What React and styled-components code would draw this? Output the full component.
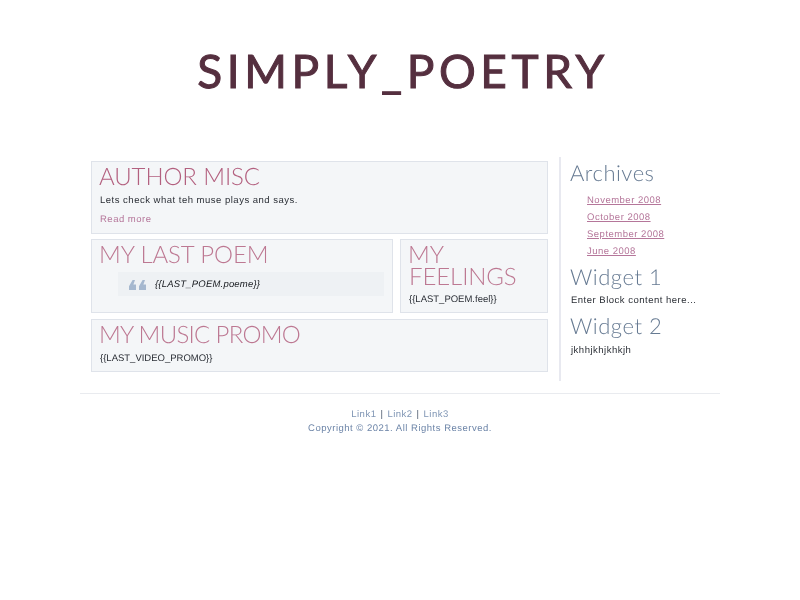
import React from 'react';
import styled, { createGlobalStyle } from 'styled-components';

const GlobalStyle = createGlobalStyle`
	html, body {
		margin: 0;
		padding: 0;
		background: #fff;
	}
	body {
		font-family: 'Liberation Sans', Arial, sans-serif;
		font-size: 9.5px;
		letter-spacing: 0.5px;
		text-rendering: geometricPrecision;
		color: #2b2f36;
	}
`;

const Page = styled.div`
	box-sizing: border-box;
	width: 640px;
	margin: 0 auto;
	will-change: transform;
`;

const Header = styled.header`
	display: flex;
	justify-content: center;
	height: 157px;
	padding: 41px 0 0 6px;
	box-sizing: border-box;
`;

const Logo = styled.h1`
	margin: 0;
	font-family: 'Lato', sans-serif;
	font-weight: 400;
	font-size: 46px;
	line-height: 60px;
	letter-spacing: 4.6px;
	-webkit-text-stroke: 1px #552f3f;
	color: #552f3f;
`;

const Main = styled.div`
	display: flex;
	align-items: flex-start;
	padding-left: 11px;
	padding-bottom: 12px;
	border-bottom: 1px solid #e9ebef;
`;

const Content = styled.main`
	width: 457px;
	padding-top: 4px;
	display: flex;
	flex-direction: column;
	gap: 5px;
`;

const Row = styled.div`
	display: flex;
	gap: 7px;
	padding-bottom: 1px;
`;

const Box = styled.section`
	box-sizing: border-box;
	flex: ${props => props.$flex || '0 0 auto'};
	height: ${props => props.$height}px;
	padding: 4px 8px 0;
	background: #f4f6f8;
	border: 1px solid #dfe3ea;
`;

const BoxTitle = styled.h2`
	margin: 0;
	font-family: 'Lato', sans-serif;
	font-weight: 300;
	font-size: 24px;
	line-height: 22px;
	text-indent: -1px;
	letter-spacing: ${props => props.$spacing || '-0.1px'};
	color: ${props => props.$dark ? '#b3607f' : '#bd7892'};
`;

const Text = styled.p`
	margin: ${props => props.$margin || '0'};
	line-height: 14px;
	letter-spacing: ${props => props.$tight ? '0' : '0.5px'};
`;

const ReadMore = styled.a`
	display: block;
	margin-top: 5px;
	line-height: 14px;
	color: #b5769a;
`;

const Quote = styled.blockquote`
	display: flex;
	align-items: center;
	gap: 9px;
	height: 24px;
	margin: 6px 0 0 18px;
	padding-left: 11px;
	width: 266px;
	box-sizing: border-box;
	background: #eef1f4;
	font-style: italic;
	letter-spacing: 0.2px;
	color: #15181d;
`;

const QuoteMark = styled.svg`
	width: 17px;
	height: 10px;
	margin-top: 2px;
	fill: #a6b8cf;
`;

const Sidebar = styled.aside`
	box-sizing: border-box;
	margin-left: 11px;
	width: 160px;
	height: 224px;
	padding: 3px 0 0 10px;
	border-left: 2px solid #e8e9f0;
`;

const SideTitle = styled.h3`
	margin: ${props => props.$margin || '0'};
	font-family: 'Lato', sans-serif;
	font-weight: 300;
	font-size: 22px;
	line-height: 26px;
	text-indent: -1px;
	letter-spacing: 0.5px;
	color: #667a92;
`;

const ArchiveList = styled.ul`
	list-style: none;
	margin: 6px 0 0;
	padding: 0 0 0 16px;
`;

const ArchiveItem = styled.li`
	height: 17px;
	line-height: 17px;
`;

const ArchiveLink = styled.a`
	color: #b5769a;
	text-decoration: underline;
`;

const Footer = styled.footer`
	padding-top: 14px;
	text-align: center;
	line-height: 14px;
	color: #6d85a8;
`;

const FooterLink = styled.a`
	color: #7f95b4;
`;

const Sep = styled.span`
	color: #4f5b6e;
	margin: 0 4px;
`;

const QuoteIcon = () => (
	<QuoteMark viewBox="0 0 17 10">
		<path d="M0 10V6.2L3.6 0H6L4.4 4.4H7V10z" />
		<path d="M10 10V6.2L13.6 0H16L14.4 4.4H17V10z" />
	</QuoteMark>
);

const App = () => (
	<>
		<GlobalStyle />
		<Page>
			<Header>
				<Logo>SIMPLY_POETRY</Logo>
			</Header>
			<Main>
				<Content>
					<Box $height={73}>
						<BoxTitle $dark>AUTHOR MISC</BoxTitle>
						<Text $margin="6px 0 0">Lets check what teh muse plays and says.</Text>
						<ReadMore>Read more</ReadMore>
					</Box>
					<Row>
						<Box $flex="0 0 302px" $height={74}>
							<BoxTitle>MY LAST POEM</BoxTitle>
							<Quote>
								<QuoteIcon />
								<span>{'{{LAST_POEM.poeme}}'}</span>
							</Quote>
						</Box>
						<Box $flex="0 0 148px" $height={74}>
							<BoxTitle>MY FEELINGS</BoxTitle>
							<Text $tight $margin="5px 0 0">{'{{LAST_POEM.feel}}'}</Text>
						</Box>
					</Row>
					<Box $height={53}>
						<BoxTitle $spacing="-0.7px">MY MUSIC PROMO</BoxTitle>
						<Text $tight $margin="6px 0 0">{'{{LAST_VIDEO_PROMO}}'}</Text>
					</Box>
				</Content>
				<Sidebar>
					<SideTitle>Archives</SideTitle>
					<ArchiveList>
						<ArchiveItem><ArchiveLink>November 2008</ArchiveLink></ArchiveItem>
						<ArchiveItem><ArchiveLink>October 2008</ArchiveLink></ArchiveItem>
						<ArchiveItem><ArchiveLink>September 2008</ArchiveLink></ArchiveItem>
						<ArchiveItem><ArchiveLink>June 2008</ArchiveLink></ArchiveItem>
					</ArchiveList>
					<SideTitle $margin="4px 0 0">Widget 1</SideTitle>
					<Text $margin="4px 0 0">Enter Block content here...</Text>
					<SideTitle $margin="5px 0 0">Widget 2</SideTitle>
					<Text $margin="5px 0 0">jkhhjkhjkhkjh</Text>
				</Sidebar>
			</Main>
			<Footer>
				<div>
					<FooterLink>Link1</FooterLink>
					<Sep>|</Sep>
					<FooterLink>Link2</FooterLink>
					<Sep>|</Sep>
					<FooterLink>Link3</FooterLink>
				</div>
				<div>Copyright © 2021. All Rights Reserved.</div>
			</Footer>
		</Page>
	</>
);

export default App;
